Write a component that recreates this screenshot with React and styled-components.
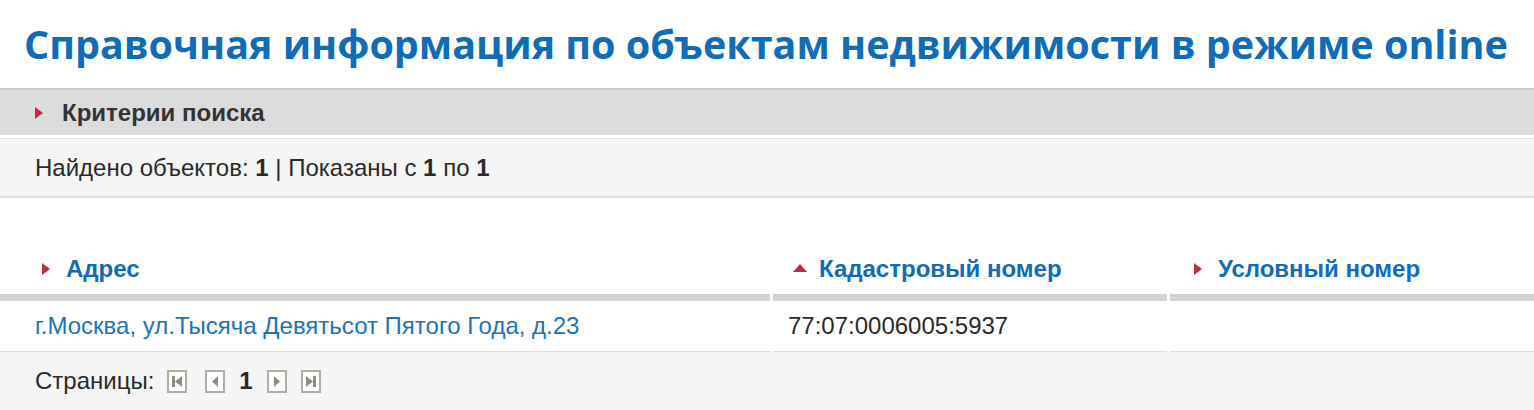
import React from "react";
import styled, { createGlobalStyle } from "styled-components";

const GlobalStyle = createGlobalStyle`
  html, body {
    margin: 0;
    padding: 0;
    background: #ffffff;
  }
  body {
    font-family: "Liberation Sans", Arial, sans-serif;
    color: #222222;
  }
`;

const Page = styled.div`
  width: 1534px;
`;

const Title = styled.h1`
  margin: 0;
  height: 88px;
  box-sizing: border-box;
  padding: 18px 0 0 24px;
  font-family: "Open Sans", sans-serif;
  font-weight: 700;
  font-size: 39.5px;
  line-height: 52px;
  color: #0f6cb6;
  white-space: nowrap;
`;

const CriteriaBar = styled.div`
  display: flex;
  align-items: center;
  gap: 19px;
  height: 47px;
  box-sizing: border-box;
  padding-left: 35px;
  background: #dcdcdc;
  border-top: 2px solid #c8c8c8;
  font-size: 24px;
  font-weight: 700;
  color: #333333;
`;

const Marker = styled.span`
  display: inline-block;
  flex: none;
  width: 0;
  height: 0;
  ${({ $up }) =>
    $up
      ? `border-left: 7px solid transparent;
         border-right: 7px solid transparent;
         border-bottom: 8px solid #c42a45;
         margin-bottom: 2px;`
      : `border-top: 6px solid transparent;
         border-bottom: 6px solid transparent;
         border-left: 8px solid #c42a45;`}
`;

const InfoBar = styled.div`
  margin-top: 3px;
  height: 60px;
  box-sizing: border-box;
  display: flex;
  align-items: center;
  padding-left: 35px;
  background: #f4f5f4;
  border-top: 1px solid #e4e4e4;
  border-bottom: 2px solid #dedede;
  font-size: 24px;
  color: #2a2a2a;

  b {
    font-weight: 700;
  }
`;

const Table = styled.div`
  margin-top: 43px;
  display: grid;
  grid-template-columns: 770px 394px 364px;
  column-gap: 3px;
`;

const HeadCell = styled.div`
  height: 60px;
  box-sizing: border-box;
  display: flex;
  align-items: center;
  gap: ${({ $gap }) => $gap}px;
  padding: 2px 0 0 ${({ $pad }) => $pad}px;
  border-bottom: 7px solid #d3d3d3;
  font-size: 24px;
  font-weight: 700;
  color: #0f6cb6;
`;

const Cell = styled.div`
  height: 51px;
  box-sizing: border-box;
  display: flex;
  align-items: center;
  padding-left: ${({ $pad }) => $pad}px;
  font-size: 24px;
  color: ${({ $link }) => ($link ? "#1a73bb" : "#2a2a2a")};
  border-bottom: 1px solid #dcdcdc;
`;

const Pager = styled.div`
  height: 58px;
  box-sizing: border-box;
  display: flex;
  align-items: center;
  padding-left: 35px;
  background: #f4f5f4;
  font-size: 24px;
  color: #2a2a2a;
`;

const PagerLabel = styled.span`
  margin-right: 13px;
`;

const PageBtn = styled.span`
  width: 20px;
  height: 23px;
  box-sizing: border-box;
  border: 2px solid #aeafa4;
  background: #ffffff;
  display: inline-flex;
  align-items: center;
  justify-content: center;
  margin-right: ${({ $gap }) => $gap}px;
`;

const Current = styled.span`
  font-weight: 700;
  margin-right: 14px;
`;

const Glyph = ({ kind }) => {
  const c = "#8d8e80";
  return (
    <svg width="14" height="15" viewBox="0 0 14 15">
      {kind === "first" && (
        <>
          <rect x="2" y="2" width="3" height="11" fill={c} />
          <polygon points="12,2 12,13 5,7.5" fill={c} />
        </>
      )}
      {kind === "prev" && <polygon points="10,2 10,13 4,7.5" fill={c} />}
      {kind === "next" && <polygon points="4,2 4,13 10,7.5" fill={c} />}
      {kind === "last" && (
        <>
          <polygon points="2,2 2,13 9,7.5" fill={c} />
          <rect x="9" y="2" width="3" height="11" fill={c} />
        </>
      )}
    </svg>
  );
};

export default function App() {
  return (
    <Page>
      <GlobalStyle />
      <Title>Справочная информация по объектам недвижимости в режиме online</Title>
      <CriteriaBar>
        <Marker />
        Критерии поиска
      </CriteriaBar>
      <InfoBar>
        Найдено объектов:&nbsp;<b>1</b>&nbsp;| Показаны с&nbsp;<b>1</b>&nbsp;по&nbsp;<b>1</b>
      </InfoBar>
      <Table>
        <HeadCell $pad={42} $gap={16}>
          <Marker />
          Адрес
        </HeadCell>
        <HeadCell $pad={20} $gap={12}>
          <Marker $up />
          Кадастровый номер
        </HeadCell>
        <HeadCell $pad={24} $gap={16}>
          <Marker />
          Условный номер
        </HeadCell>
        <Cell $pad={35} $link>
          г.Москва, ул.Тысяча Девятьсот Пятого Года, д.23
        </Cell>
        <Cell $pad={15}>77:07:0006005:5937</Cell>
        <Cell $pad={15} />
      </Table>
      <Pager>
        <PagerLabel>Страницы:</PagerLabel>
        <PageBtn $gap={18}>
          <Glyph kind="first" />
        </PageBtn>
        <PageBtn $gap={14}>
          <Glyph kind="prev" />
        </PageBtn>
        <Current>1</Current>
        <PageBtn $gap={14}>
          <Glyph kind="next" />
        </PageBtn>
        <PageBtn $gap={0}>
          <Glyph kind="last" />
        </PageBtn>
      </Pager>
    </Page>
  );
}
